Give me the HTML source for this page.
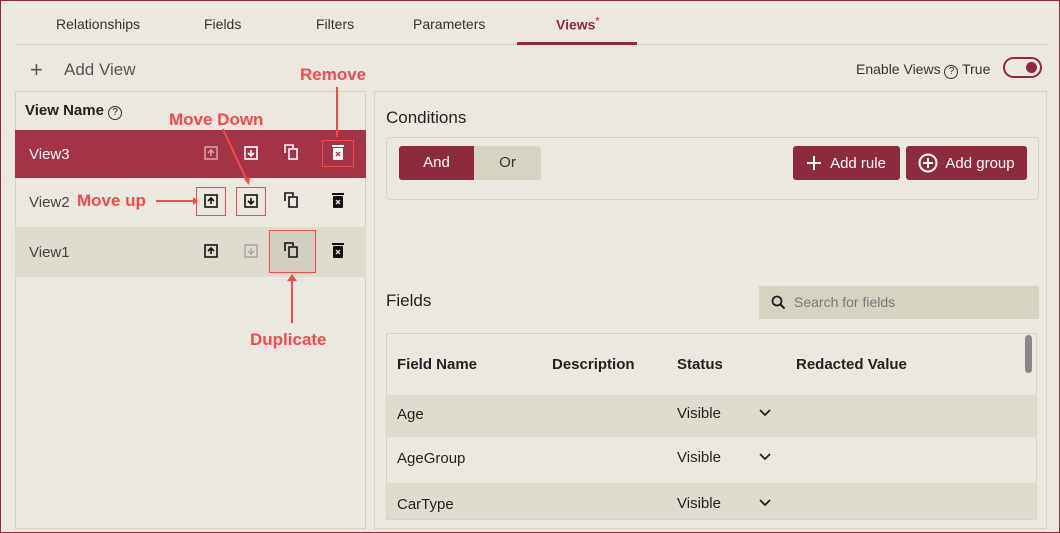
<!DOCTYPE html>
<html><head><style>
*{box-sizing:border-box;margin:0;padding:0}
body{width:1060px;height:533px;background:#ebe8e0;font-family:"Liberation Sans",sans-serif;position:relative;overflow:hidden;color:#222;border:1px solid #8e2a3d}
.a{position:absolute}
.t{font-size:14px;color:#333}
.ann{position:absolute;color:#f44a4a;font-weight:bold;font-size:17px}
.box{position:absolute;border:1.5px solid #f44a4a}
.th{font-weight:bold;font-size:15px;color:#222;position:absolute;top:355px}
.td{font-size:15px;position:absolute;color:#222}
.btn{position:absolute;top:145px;height:34px;background:#8e2a3d;color:#fff;font-size:15px;border-radius:3px;display:flex;align-items:center;justify-content:center;gap:9px}
</style></head><body>
<div class="a t" style="left:55px;top:15px">Relationships</div>
<div class="a t" style="left:203px;top:15px">Fields</div>
<div class="a t" style="left:315px;top:15px">Filters</div>
<div class="a t" style="left:412px;top:15px">Parameters</div>
<div class="a" style="left:555px;top:15px;font-size:14px;font-weight:bold;color:#8e2a3d">Views<sup style="color:#e33;font-size:10px">*</sup></div>
<div class="a" style="left:14px;top:43px;width:1032px;height:1px;background:#d2cfc4"></div>
<div class="a" style="left:516px;top:41px;width:120px;height:3px;background:#8e2a3d"></div>
<div class="a" style="left:29px;top:56px;font-size:22px;color:#555;font-weight:300">+</div>
<div class="a" style="left:63px;top:59px;font-size:17px;color:#555">Add View</div>
<div class="a" style="left:855px;top:60px;font-size:14px;color:#333">Enable Views <span style="display:inline-block;width:14px;height:14px;border:1px solid #333;border-radius:50%;font-size:10px;text-align:center;line-height:12px">?</span> True</div>
<div class="a" style="left:1002px;top:56px;width:39px;height:21px;border:2px solid #8e2a3d;border-radius:11px"><div class="a" style="right:3px;top:3px;width:11px;height:11px;border-radius:50%;background:#8e2a3d"></div></div>

<div class="a" style="left:14px;top:90px;width:351px;height:438px;border:1px solid #d2cfc4"></div>
<div class="a" style="left:24px;top:101px;font-size:15px;font-weight:bold;color:#222">View Name <span style="display:inline-block;width:14px;height:14px;border:1px solid #333;border-radius:50%;font-size:10px;text-align:center;line-height:12px;font-weight:normal">?</span></div>
<div class="a" style="left:14px;top:129px;width:351px;height:48px;background:#a33347"></div>
<div class="a" style="left:14px;top:226px;width:351px;height:50px;background:#dedbcf"></div>
<div class="a" style="left:28px;top:145px;font-size:15px;color:#fff">View3</div>
<div class="a" style="left:28px;top:193px;font-size:15px;color:#444">View2</div>
<div class="a" style="left:28px;top:243px;font-size:15px;color:#444">View1</div>
<svg class="a" style="left:0;top:0" width="370" height="290">
<rect x="268" y="231" width="46" height="40" fill="#d2cfc2"/>
<g fill="none" stroke-width="1.6">
<rect x="204" y="146" width="12" height="12" stroke="#d99aa6"/><path d="M210 155v-6M207 152l3-3 3 3" stroke="#d99aa6"/>
<rect x="244" y="146" width="12" height="12" stroke="#fff"/><path d="M250 149v6M247 152l3 3 3-3" stroke="#fff"/>
<path d="M284 152v-8h8v3M288 148h8v10h-8z" stroke="#fff"/>
<rect x="204" y="194" width="12" height="12" stroke="#111"/><path d="M210 203v-6M207 200l3-3 3 3" stroke="#111"/>
<rect x="244" y="194" width="12" height="12" stroke="#111"/><path d="M250 197v6M247 200l3 3 3-3" stroke="#111"/>
<path d="M284 200v-8h8v3M288 196h8v10h-8z" stroke="#111"/>
<rect x="204" y="244" width="12" height="12" stroke="#111"/><path d="M210 253v-6M207 250l3-3 3 3" stroke="#111"/>
<rect x="244" y="244" width="12" height="12" stroke="#aaa"/><path d="M250 247v6M247 250l3 3 3-3" stroke="#aaa"/>
<path d="M284 250v-8h8v3M288 246h8v10h-8z" stroke="#111"/>
</g>
<g id="tr">
<rect x="332" y="147" width="10" height="12" rx="1" fill="#fff"/><rect x="331" y="144" width="12" height="2" fill="#fff"/><path d="M335 151l4 4M339 151l-4 4" stroke="#a33347" stroke-width="1.3"/>
<rect x="332" y="195" width="10" height="12" rx="1" fill="#111"/><rect x="331" y="192" width="12" height="2" fill="#111"/><path d="M335 199l4 4M339 199l-4 4" stroke="#ebe8e0" stroke-width="1.3"/>
<rect x="332" y="245" width="10" height="12" rx="1" fill="#111"/><rect x="331" y="242" width="12" height="2" fill="#111"/><path d="M335 249l4 4M339 249l-4 4" stroke="#dedbcf" stroke-width="1.3"/>
</g>
</svg>
<div class="box" style="left:321px;top:139px;width:32px;height:27px"></div>
<div class="box" style="left:195px;top:186px;width:30px;height:29px"></div>
<div class="box" style="left:235px;top:186px;width:30px;height:29px"></div>
<div class="box" style="left:268px;top:229px;width:47px;height:43px"></div>
<div class="ann" style="left:299px;top:64px">Remove</div>
<div class="a" style="left:335px;top:86px;width:2px;height:50px;background:#f44a4a"></div>
<div class="ann" style="left:168px;top:109px">Move Down</div>
<svg class="a" style="left:0;top:0" width="370" height="340"><path d="M222 128L247 182" stroke="#f44a4a" stroke-width="2"/><path d="M155 200H192" stroke="#f44a4a" stroke-width="2"/><path d="M192 196l5 4-5 4zM243 178l5 6 1-8zM286 280l5-7 5 7z" fill="#f44a4a"/><path d="M291 278V322" stroke="#f44a4a" stroke-width="2"/></svg>
<div class="ann" style="left:76px;top:190px">Move up</div>
<div class="ann" style="left:249px;top:329px">Duplicate</div>

<div class="a" style="left:373px;top:90px;width:673px;height:438px;border:1px solid #d2cfc4"></div>
<div class="a" style="left:385px;top:107px;font-size:17px;color:#222">Conditions</div>
<div class="a" style="left:385px;top:136px;width:653px;height:63px;border:1px solid #d6d3c6;border-radius:4px"></div>
<div class="a" style="left:398px;top:145px;width:75px;height:34px;background:#8e2a3d;color:#fff;font-size:15px;text-align:center;line-height:34px;border-radius:3px 0 0 3px">And</div>
<div class="a" style="left:473px;top:145px;width:67px;height:34px;background:#d6d3c2;color:#333;font-size:15px;text-align:center;line-height:34px;border-radius:0 3px 3px 0">Or</div>
<div class="btn" style="left:792px;width:107px"><svg width="14" height="14"><path d="M7 0v14M0 7h14" stroke="#fff" stroke-width="2"/></svg>Add rule</div>
<div class="btn" style="left:905px;width:121px;gap:7px"><svg width="20" height="20"><circle cx="10" cy="10" r="8.5" fill="none" stroke="#fff" stroke-width="2"/><path d="M10 5v10M5 10h10" stroke="#fff" stroke-width="2"/></svg>Add group</div>
<div class="a" style="left:385px;top:290px;font-size:17px;color:#222">Fields</div>
<div class="a" style="left:758px;top:285px;width:280px;height:33px;background:#d6d3c2;font-size:14px;color:#777;line-height:33px;padding-left:35px">Search for fields</div>
<svg class="a" style="left:770px;top:294px" width="16" height="16"><circle cx="6" cy="6" r="4.5" fill="none" stroke="#222" stroke-width="1.8"/><path d="M9.5 9.5l4 4" stroke="#222" stroke-width="2"/></svg>
<div class="a" style="left:385px;top:332px;width:651px;height:187px;border:1px solid #d6d3c6;overflow:hidden">
<div class="a" style="left:0;top:61px;width:651px;height:42px;background:#dedbcf"></div>
<div class="a" style="left:0;top:149px;width:651px;height:40px;background:#dedbcf"></div>
<div class="a" style="left:638px;top:1px;width:7px;height:38px;background:#888;border-radius:4px"></div>
</div>
<div class="th" style="left:396px">Field Name</div>
<div class="th" style="left:551px">Description</div>
<div class="th" style="left:676px">Status</div>
<div class="th" style="left:795px">Redacted Value</div>
<div class="td" style="left:396px;top:405px">Age</div>
<div class="td" style="left:396px;top:449px">AgeGroup</div>
<div class="td" style="left:396px;top:495px">CarType</div>
<div class="td" style="left:676px;top:404px">Visible</div>
<div class="td" style="left:676px;top:448px">Visible</div>
<div class="td" style="left:676px;top:494px">Visible</div>
<svg class="a" style="left:758px;top:408px" width="12" height="100"><g fill="none" stroke="#222" stroke-width="1.8"><path d="M1 1l5 5 5-5"/><path d="M1 45l5 5 5-5"/><path d="M1 91l5 5 5-5"/></g></svg>
</body></html>
